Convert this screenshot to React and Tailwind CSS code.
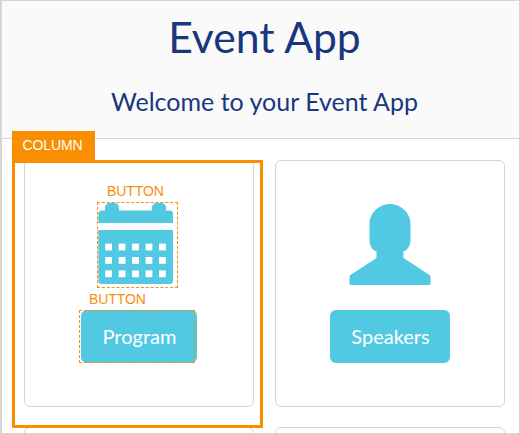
const dots = [0, 1, 2].flatMap((r) => [0, 1, 2, 3, 4].map((c) => ({ r, c })));

function CalendarIcon() {
  return (
    <svg width="76" height="82" viewBox="0 0 76 82" fill="#52c9e3" className="block">
      <path d="M7 7.5V4.5a4.5 4.5 0 0 1 4.5-4.5h5a4.5 4.5 0 0 1 4.5 4.5v3h33V4.5a4.5 4.5 0 0 1 4.5-4.5h5a4.5 4.5 0 0 1 4.5 4.5v3h3.5a3.5 3.5 0 0 1 3.5 3.5v9H.3V11a3.5 3.5 0 0 1 3.5-3.5z" />
      <path d="M.3 27h74.7V77.5a3.5 3.5 0 0 1-3.5 3.5H3.8A3.5 3.5 0 0 1 .3 77.5z" />
      {dots.map(({ r, c }) => (
        <rect key={`${r}-${c}`} x={7.2 + c * 13.45} y={40.6 + r * 13.4} width="6.8" height="6.8" fill="#fff" />
      ))}
    </svg>
  );
}

function PersonIcon() {
  return (
    <svg width="82" height="81" viewBox="0 0 82 81" fill="#52c9e3" className="block">
      <path d="M41 0C52 0 61.5 9 61.5 20V36C61.5 41 59 45 56 47H54.5V54L80.5 71Q81.5 72 81.5 73V79.5Q81.5 81 80 81H2Q.5 81 .5 79.5V73Q.5 72 1.5 71L27.5 54V47H26C23 45 20.5 41 20.5 36V20C20.5 9 30 0 41 0Z" />
    </svg>
  );
}

function EditLabel({ className }) {
  return (
    <span className={`absolute font-['Liberation_Sans',sans-serif] text-sm leading-4 tracking-[-0.1px] text-[#f98e0b] ${className}`}>
      BUTTON
    </span>
  );
}

function Card({ children }) {
  return (
    <div className="flex h-[247px] w-[230px] shrink-0 flex-col items-center rounded-md border border-[#d5d5d5] bg-white pt-[42px]">
      {children}
    </div>
  );
}

export default function App() {
  return (
    <div className="relative h-[434px] w-[520px] overflow-hidden border border-l-2 border-[#d5d5d5] bg-white font-['Lato',sans-serif]">
      <header className="h-[138px] border-b border-[#d5d5d5] bg-[#fafafa] pt-[10px] pl-[8px] text-center text-[#19377f]">
        <h1 className="text-[42.7px] leading-[52px]">Event App</h1>
        <p className="mt-[23px] text-[25px] leading-[30px]">Welcome to your Event App</p>
      </header>

      <main className="flex flex-col gap-5 pt-[21px] pl-[22px]">
        <div className="flex gap-[21px]">
          <Card>
            <div className="relative -left-[3px]">
              <CalendarIcon />
              <div className="absolute -top-px -left-px h-[86px] w-[81px] border border-dashed border-[#f98e0b]" />
              <EditLabel className="-top-5 left-[9px]" />
            </div>
            <div className="relative mt-[25px]">
              <EditLabel className="-top-[19px] left-2" />
              <button className="block h-[53px] w-[116px] rounded-md bg-[#52c9e3] pb-[2px] pl-px text-xl text-white">Program</button>
              <div className="absolute top-0 -left-[2px] h-[53px] w-[116px] border border-dashed border-[#f98e0b]" />
            </div>
          </Card>
          <Card>
            <div className="mt-px">
              <PersonIcon />
            </div>
            <button className="mt-[25px] h-[53px] w-[120px] rounded-md bg-[#52c9e3] pb-[2px] pl-px text-xl text-white">Speakers</button>
          </Card>
        </div>
        <div className="flex gap-[21px]">
          <Card />
          <Card />
        </div>
      </main>

      <div className="absolute top-[159px] left-[10px] h-[268px] w-[251px] border-3 border-[#f98e00]" />
      <div className="absolute top-[130px] left-[10px] flex h-[30px] w-[83px] items-center justify-center bg-[#f98e00] pr-[2px] pb-[2px] font-['Liberation_Sans',sans-serif] text-sm tracking-[-0.1px] text-white">
        COLUMN
      </div>
    </div>
  );
}
